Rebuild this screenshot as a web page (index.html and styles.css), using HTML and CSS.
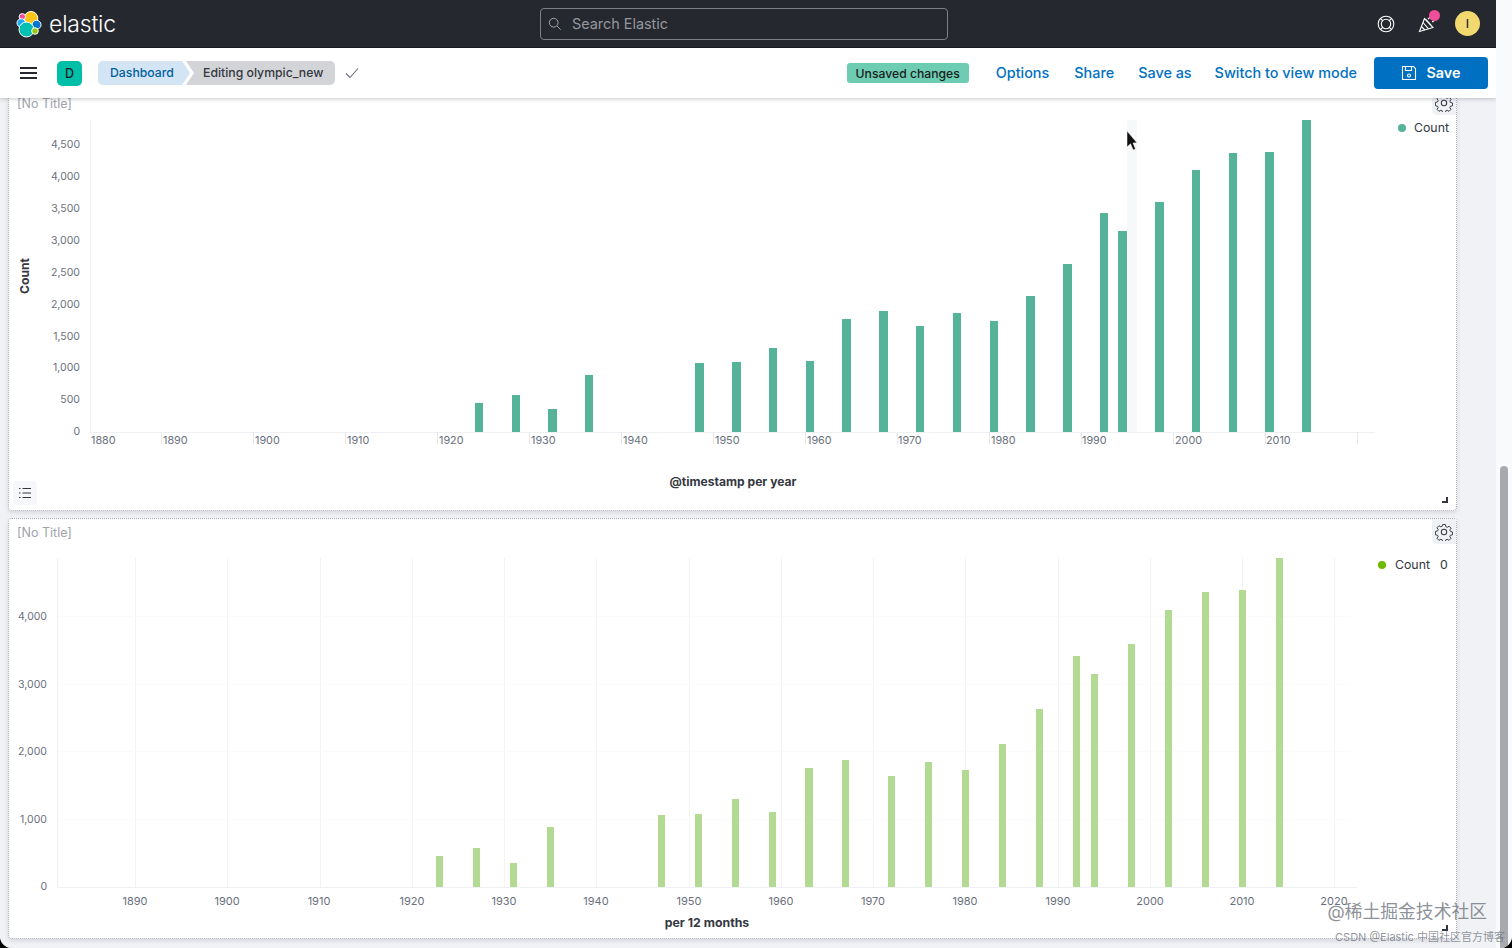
FILE: index.html
```html
<!DOCTYPE html>
<html lang="en">
<head>
<meta charset="utf-8">
<title>Editing olympic_new - Elastic</title>
<link rel="stylesheet" href="styles.css">
</head>
<body>
<div class="shell">
  <div class="app">
    <header class="topbar">
      <div class="brand">
        <svg class="logo" viewBox="0 0 28 28" width="28" height="28">
          <circle cx="15" cy="8.300" r="6.800" fill="#fec514" stroke="#fff" stroke-width="1"/>
          <circle cx="6.300" cy="6.800" r="3.200" fill="#f04e98" stroke="#fff" stroke-width="1"/>
          <circle cx="5.300" cy="13" r="4.300" fill="#1ba9f5" stroke="#fff" stroke-width="1"/>
          <circle cx="20.500" cy="14.800" r="4.500" fill="#0077cc" stroke="#fff" stroke-width="1"/>
          <circle cx="10.500" cy="19.500" r="7.500" fill="#00bfb3" stroke="#fff" stroke-width="1"/>
          <circle cx="19" cy="21" r="3.300" fill="#93c90e" stroke="#fff" stroke-width="1"/>
        </svg>
        <span class="wordmark">elastic</span>
      </div>
      <div class="search">
        <svg class="search-icon" viewBox="0 0 16 16" width="14" height="14"><circle cx="6.500" cy="6.500" r="5" fill="none" stroke="#a6a8ad" stroke-width="1.100"/><path d="M10.200 10.200 14.500 14.500" stroke="#a6a8ad" stroke-width="1.100"/></svg>
        <span class="search-text">Search Elastic</span>
      </div>
      <div class="top-icons">
        <svg class="help-icon" viewBox="0 0 18 18" width="18" height="18" fill="none" stroke="#fff" stroke-width="1.100"><circle cx="9" cy="9" r="7.800"/><circle cx="9" cy="9" r="4.700"/><path d="M3.500 3.500 5.700 5.700M14.500 3.500 12.300 5.700M3.500 14.500 5.700 12.300M14.500 14.500 12.300 12.300"/></svg>
        <div class="news">
          <svg viewBox="0 0 18 18" width="18" height="18" fill="none" stroke="#fff" stroke-width="1.100"><path d="M6.500 3.500 1.500 16.500 15 12.500Z"/><path d="M5 7.500 10.500 13.800M3.400 11.500 6.800 15M8 4.500 13 10"/><path d="M10 4 13 1.500M14 7 16.500 5.500"/></svg>
          <span class="news-dot"></span>
        </div>
        <div class="user">I</div>
      </div>
    </header>

    <nav class="appbar">
      <div class="app-left">
        <div class="menu"><span></span><span></span><span></span></div>
        <div class="space">D</div>
        <div class="crumbs">
          <span class="crumb crumb-first">Dashboard</span>
          <span class="crumb crumb-last">Editing olympic_new</span>
        </div>
        <svg class="check" viewBox="0 0 14 12" width="14" height="12"><path d="M1 6.500 5 10.500 13 1.500" fill="none" stroke="#69707d" stroke-width="1.100"/></svg>
      </div>
      <div class="app-right">
        <span class="badge">Unsaved changes</span>
        <a class="link link-options">Options</a>
        <a class="link link-share">Share</a>
        <a class="link link-saveas">Save as</a>
        <a class="link link-switch">Switch to view mode</a>
        <button class="save">
          <svg viewBox="0 0 16 16" width="16" height="16" fill="none" stroke="#fff" stroke-width="1.100"><path d="M1.500 1.500H12.500L14.500 3.500V14.500H1.500Z"/><path d="M4.500 1.500V5.500H10.500V1.500"/><circle cx="8" cy="10.500" r="1.500"/></svg>
          <span class="save-label">Save</span>
        </button>
      </div>
    </nav>

    <main class="dashboard">
      <section class="panel panel-one">
        <div class="panel-head"><span class="panel-title">[No Title]</span></div>
        <button class="gear gear-one">
          <svg viewBox="0 0 16 16" width="18" height="18" fill="none" stroke="#343741" stroke-width=".9"><path d="M6.700 1h2.600l.4 2 1.300.6 1.800-1 1.800 1.900-1.100 1.700.5 1.300 2 .5v2.600l-2 .4-.5 1.300 1 1.700-1.800 1.800-1.700-1-1.300.5-.4 2H6.700l-.4-2-1.300-.5-1.700 1-1.800-1.800 1-1.700-.5-1.300-2-.4V7.500l2-.5.5-1.300-1-1.700L3.300 2.100l1.700 1 1.300-.5z" stroke-linejoin="round" transform="translate(.4 .4) scale(.95)"/><circle cx="8" cy="8" r="2.400"/></svg>
        </button>
        <svg class="chart chart-one" viewBox="9 117 1447 393">
          <rect class="hover" x="1127" y="120" width="10" height="312"/>
          <path class="axis" d="M90.500 120V432M90 432.500H1375"/>
          <path class="tick" d="M161.500 432V444M253.500 432V444M345.500 432V444M437.500 432V444M529.500 432V444M621.500 432V444M713.500 432V444M805.500 432V444M897.500 432V444M989.500 432V444M1081.500 432V444M1173.500 432V444M1265.500 432V444M1357.500 432V444"/>
          <g class="bars-green">
            <rect x="475" y="403" width="8" height="29"/>
            <rect x="512" y="395" width="8" height="37"/>
            <rect x="548" y="409" width="9" height="23"/>
            <rect x="585" y="375" width="8" height="57"/>
            <rect x="695" y="363" width="9" height="69"/>
            <rect x="732" y="362" width="9" height="70"/>
            <rect x="769" y="348" width="8" height="84"/>
            <rect x="806" y="361" width="8" height="71"/>
            <rect x="842" y="319" width="9" height="113"/>
            <rect x="879" y="311" width="9" height="121"/>
            <rect x="916" y="326" width="8" height="106"/>
            <rect x="953" y="313" width="8" height="119"/>
            <rect x="990" y="321" width="8" height="111"/>
            <rect x="1026" y="296" width="9" height="136"/>
            <rect x="1063" y="264" width="9" height="168"/>
            <rect x="1100" y="213" width="8" height="219"/>
            <rect x="1118" y="231" width="9" height="201"/>
            <rect x="1155" y="202" width="9" height="230"/>
            <rect x="1192" y="170" width="8" height="262"/>
            <rect x="1229" y="153" width="8" height="279"/>
            <rect x="1265" y="152" width="9" height="280"/>
            <rect x="1302" y="120" width="9" height="312"/>
          </g>
          <g class="ylabels">
            <text x="80" y="148">4,500</text><text x="80" y="180">4,000</text><text x="80" y="212">3,500</text><text x="80" y="244">3,000</text><text x="80" y="276">2,500</text><text x="80" y="308">2,000</text><text x="80" y="340">1,500</text><text x="80" y="371">1,000</text><text x="80" y="403">500</text><text x="80" y="435">0</text>
          </g>
          <g class="xlabels-start">
            <text x="91" y="444">1880</text><text x="163" y="444">1890</text><text x="255" y="444">1900</text><text x="347" y="444">1910</text><text x="439" y="444">1920</text><text x="531" y="444">1930</text><text x="623" y="444">1940</text><text x="715" y="444">1950</text><text x="807" y="444">1960</text><text x="898" y="444">1970</text><text x="991" y="444">1980</text><text x="1082" y="444">1990</text><text x="1175" y="444">2000</text><text x="1266" y="444">2010</text>
          </g>
          <text class="axis-title" x="733" y="486">@timestamp per year</text>
          <text class="axis-title" transform="translate(29 276) rotate(-90)">Count</text>
          <circle cx="1402" cy="128" r="4" class="dot-green"/>
          <text class="legend" x="1414" y="132">Count</text>
          <path class="pointer" d="M1127 131V147L1130.500 143.800 1133.200 150 1135.500 149 1133 143 1137 142.800Z"/>
        </svg>
        <button class="list-btn">
          <svg viewBox="0 0 14 12" width="14" height="12" fill="none" stroke="#343741" stroke-width="1"><path d="M4.500 1.500H13M4.500 6H13M4.500 10.500H13M1 1.500H2.500M1 6H2.500M1 10.500H2.500"/></svg>
        </button>
        <span class="resize"></span>
      </section>

      <section class="panel panel-two">
        <div class="panel-head"><span class="panel-title">[No Title]</span></div>
        <button class="gear gear-two">
          <svg viewBox="0 0 16 16" width="18" height="18" fill="none" stroke="#343741" stroke-width=".9"><path d="M6.700 1h2.600l.4 2 1.300.6 1.800-1 1.800 1.900-1.100 1.700.5 1.300 2 .5v2.600l-2 .4-.5 1.300 1 1.700-1.800 1.800-1.700-1-1.300.5-.4 2H6.700l-.4-2-1.300-.5-1.700 1-1.800-1.800 1-1.700-.5-1.300-2-.4V7.500l2-.5.5-1.300-1-1.700L3.300 2.100l1.700 1 1.300-.5z" stroke-linejoin="round" transform="translate(.4 .4) scale(.95)"/><circle cx="8" cy="8" r="2.400"/></svg>
        </button>
        <svg class="chart chart-two" viewBox="9 546 1447 392">
          <path class="grid" d="M135.500 558V887M227.500 558V887M320.500 558V887M412.500 558V887M504.500 558V887M596.500 558V887M689.500 558V887M781.500 558V887M873.500 558V887M965.500 558V887M1058.500 558V887M1150.500 558V887M1242.500 558V887M1334.500 558V887"/>
          <path class="grid-faint" d="M57 616.500H1350M57 684.500H1350M57 751.500H1350M57 819.500H1350"/>
          <path class="axis" d="M57.500 558V887M57 887.500H1357"/>
          <g class="bars-lime">
            <rect x="436" y="856" width="7" height="31"/>
            <rect x="473" y="848" width="7" height="39"/>
            <rect x="510" y="863" width="7" height="24"/>
            <rect x="547" y="827" width="7" height="60"/>
            <rect x="658" y="815" width="7" height="72"/>
            <rect x="695" y="814" width="7" height="73"/>
            <rect x="732" y="799" width="7" height="88"/>
            <rect x="769" y="812" width="7" height="75"/>
            <rect x="805" y="768" width="8" height="119"/>
            <rect x="842" y="760" width="7" height="127"/>
            <rect x="888" y="776" width="7" height="111"/>
            <rect x="925" y="762" width="7" height="125"/>
            <rect x="962" y="770" width="7" height="117"/>
            <rect x="999" y="744" width="7" height="143"/>
            <rect x="1036" y="709" width="7" height="178"/>
            <rect x="1073" y="656" width="7" height="231"/>
            <rect x="1091" y="674" width="7" height="213"/>
            <rect x="1128" y="644" width="7" height="243"/>
            <rect x="1165" y="610" width="7" height="277"/>
            <rect x="1202" y="592" width="7" height="295"/>
            <rect x="1239" y="590" width="7" height="297"/>
            <rect x="1276" y="558" width="7" height="329"/>
          </g>
          <g class="ylabels">
            <text x="47" y="620">4,000</text><text x="47" y="688">3,000</text><text x="47" y="755">2,000</text><text x="47" y="823">1,000</text><text x="47" y="890">0</text>
          </g>
          <g class="xlabels-mid">
            <text x="135" y="905">1890</text><text x="227" y="905">1900</text><text x="319" y="905">1910</text><text x="412" y="905">1920</text><text x="504" y="905">1930</text><text x="596" y="905">1940</text><text x="689" y="905">1950</text><text x="781" y="905">1960</text><text x="873" y="905">1970</text><text x="965" y="905">1980</text><text x="1058" y="905">1990</text><text x="1150" y="905">2000</text><text x="1242" y="905">2010</text><text x="1334" y="905">2020</text>
          </g>
          <text class="axis-title axis-title-b" x="707" y="927">per 12 months</text>
          <circle cx="1382" cy="565" r="4" class="dot-lime"/>
          <text class="legend" x="1395" y="569">Count</text>
          <text class="legend" x="1440" y="569">0</text>
        </svg>
        <span class="resize"></span>
      </section>
    </main>
  </div>
  <aside class="scrollbar"><div class="thumb"></div></aside>
  <div class="watermark">
    <div class="wm-big">@稀土掘金技术社区</div>
    <div class="wm-small">CSDN @Elastic 中国社区官方博客</div>
  </div>
</div>
</body>
</html>
```

FILE: styles.css
```css
* { box-sizing: border-box; }
html, body { margin: 0; height: 100%; background: #000; overflow: hidden; }
body { font-family: Inter, "Noto Sans CJK SC", sans-serif; color: #343741; }

.shell {
  position: relative;
  display: flex;
  width: 1512px;
  height: 948px;
  overflow: hidden;
  border-radius: 0 0 12px 12px;
  background: #f8f9fb;
}
.app { width: 1496px; height: 948px; display: flex; flex-direction: column; overflow: hidden; background: #f1f2f5; }

.scrollbar { width: 16px; padding: 466px 4px 0; background: #f9fafc; }
.thumb { width: 8px; height: 490px; background: #a9aaaf; border-radius: 4px 4px 0 0; }

.topbar {
  position: relative;
  z-index: 3;
  flex: none;
  height: 48px;
  background: #25282f;
  border-bottom: 1px solid #17191d;
  display: flex;
  align-items: center;
  padding: 0 16px;
}
.brand { display: flex; align-items: center; gap: 5px; width: 524px; }
.logo { flex: none; }
.wordmark { font-size: 23px; font-weight: 300; color: #fff; letter-spacing: -.2px; }
.search {
  width: 408px;
  height: 32px;
  border: 1px solid #7d8087;
  border-radius: 4px;
  display: flex;
  align-items: center;
  gap: 10px;
  padding-left: 7px;
}
.search-icon { flex: none; }
.search-text { font-size: 14.4px; color: #94979d; }
.top-icons { margin-left: auto; display: flex; align-items: center; }
.help-icon { margin-right: 23px; }
.news { position: relative; width: 18px; height: 18px; margin-right: 19px; }
.news-dot { position: absolute; top: -5px; right: -4px; width: 11px; height: 11px; border-radius: 50%; background: #f04e98; }
.user {
  width: 25px; height: 25px; border-radius: 50%;
  background: #f1d86f; color: #25282f;
  font-size: 12px; font-weight: 500;
  display: flex; align-items: center; justify-content: center;
}

.appbar {
  position: relative;
  z-index: 2;
  flex: none;
  height: 50px;
  background: #fff;
  box-shadow: 0 1px 4px rgba(60, 66, 80, .28);
  display: flex;
  align-items: center;
  justify-content: space-between;
  padding: 0 8px 0 20px;
}
.app-left, .app-right { display: flex; align-items: center; }
.menu { width: 17px; display: flex; flex-direction: column; gap: 3px; margin-right: 20px; }
.menu span { display: block; height: 2px; background: #25282f; }
.space {
  width: 25px; height: 25px; border-radius: 5px;
  background: #00bfa9; color: #1a1c21;
  font-size: 12.5px; font-weight: 500;
  display: flex; align-items: center; justify-content: center;
  margin-right: 16px;
}
.crumbs { display: flex; font-size: 12.25px; }
.crumb { height: 24px; padding-bottom: 1px; display: flex; align-items: center; }
.crumb-first {
  width: 92px; padding-left: 12px;
  background: #d3e4f5; color: #00609f; font-weight: 500;
  border-radius: 5px 0 0 5px;
  clip-path: polygon(0 0, 84px 0, 100% 50%, 84px 100%, 0 100%);
}
.crumb-last {
  width: 149px; margin-left: -4px; padding-left: 17px;
  background: #d3d4d7; color: #343741; font-weight: 500;
  border-radius: 0 5px 5px 0;
  clip-path: polygon(0 0, 100% 0, 100% 100%, 0 100%, 8px 50%);
}
.check { margin-left: 10px; }

.badge {
  height: 20px; width: 122px;
  background: #6dccb1; color: #1a1c21;
  border-radius: 3px;
  font-size: 12.2px; font-weight: 500;
  display: flex; align-items: center; justify-content: center;
  margin-right: 27px;
}
.link { color: #0071c2; font-size: 14.4px; font-weight: 500; white-space: nowrap; margin-bottom: 2px; }
.link-options { margin-right: 25px; }
.link-share { margin-right: 24px; }
.link-saveas { margin-right: 23px; }
.link-switch { margin-right: 17px; }
.save {
  width: 114px; height: 32px;
  background: #0071c2; color: #fff;
  border: 0; border-radius: 4px;
  font: 600 14.4px Inter, sans-serif;
  display: flex; align-items: center; justify-content: center; gap: 9px;
}
.save-label { margin-bottom: 2px; }

.dashboard {
  margin-top: -9px;
  padding-left: 8px;
  display: flex;
  flex-direction: column;
  gap: 7px;
}
.panel {
  position: relative;
  width: 1449px;
  background: #fff;
  border: 1px dotted #a8abb2;
  border-radius: 4px;
  box-shadow: 0 2px 4px rgba(60, 66, 80, .14);
  display: flex;
  flex-direction: column;
}
.panel-one { height: 422px; }
.panel-two { height: 421px; }
.panel-head { flex: none; height: 27px; padding: 4px 8px 0; line-height: 16px; }
.panel-title { font-size: 12.5px; color: #9fa3ab; }
.chart { display: block; flex: none; width: 1447px; }
.chart-one { height: 393px; }
.chart-two { height: 392px; }

.gear {
  position: absolute; top: 0; right: 0;
  width: 24px; height: 25px; padding: 0;
  border: 0; border-radius: 0 0 0 5px;
  background: #f0f1f4;
  display: flex; align-items: center; justify-content: center;
}
.list-btn {
  position: absolute; left: 4px; bottom: 5px;
  width: 24px; height: 24px; padding: 0;
  border: 0; border-radius: 4px;
  background: #f5f7fa;
  display: flex; align-items: center; justify-content: center;
}
.resize {
  position: absolute; right: 8px; bottom: 7px;
  width: 6px; height: 6px;
  border-right: 2px solid #343741; border-bottom: 2px solid #343741;
}

.hover { fill: #f7f8fa; }
.axis { stroke: #eef0f3; stroke-width: 1; fill: none; }
.tick { stroke: #e6e8ec; stroke-width: 1; fill: none; }
.grid { stroke: #f2f3f5; stroke-width: 1; fill: none; }
.grid-faint { stroke: #fafbfb; stroke-width: 1; fill: none; }
.bars-green rect { fill: #54b399; }
.bars-lime rect { fill: #b3da92; }
.dot-green { fill: #54b399; }
.dot-lime { fill: #6dbb00; }
.pointer { fill: #111; stroke: #fff; stroke-width: .5; }
.ylabels text { font-size: 10.5px; fill: #69707d; text-anchor: end; }
.xlabels-start text { font-size: 10.8px; fill: #69707d; }
.xlabels-mid text { font-size: 11px; fill: #69707d; text-anchor: middle; }
.axis-title { font-size: 12.1px; font-weight: 700; fill: #343741; text-anchor: middle; }
.axis-title-b { font-size: 12.3px; }
.legend { font-size: 12.3px; fill: #343741; }

.watermark { position: absolute; right: 7px; bottom: 3px; text-align: right; pointer-events: none; }
.wm-big { font-size: 17.8px; line-height: 24px; color: rgba(110, 115, 125, .8); padding-right: 18px; margin-bottom: 5px; }
.wm-small { font-size: 11px; line-height: 16px; color: rgba(110, 115, 125, .75); }
```
